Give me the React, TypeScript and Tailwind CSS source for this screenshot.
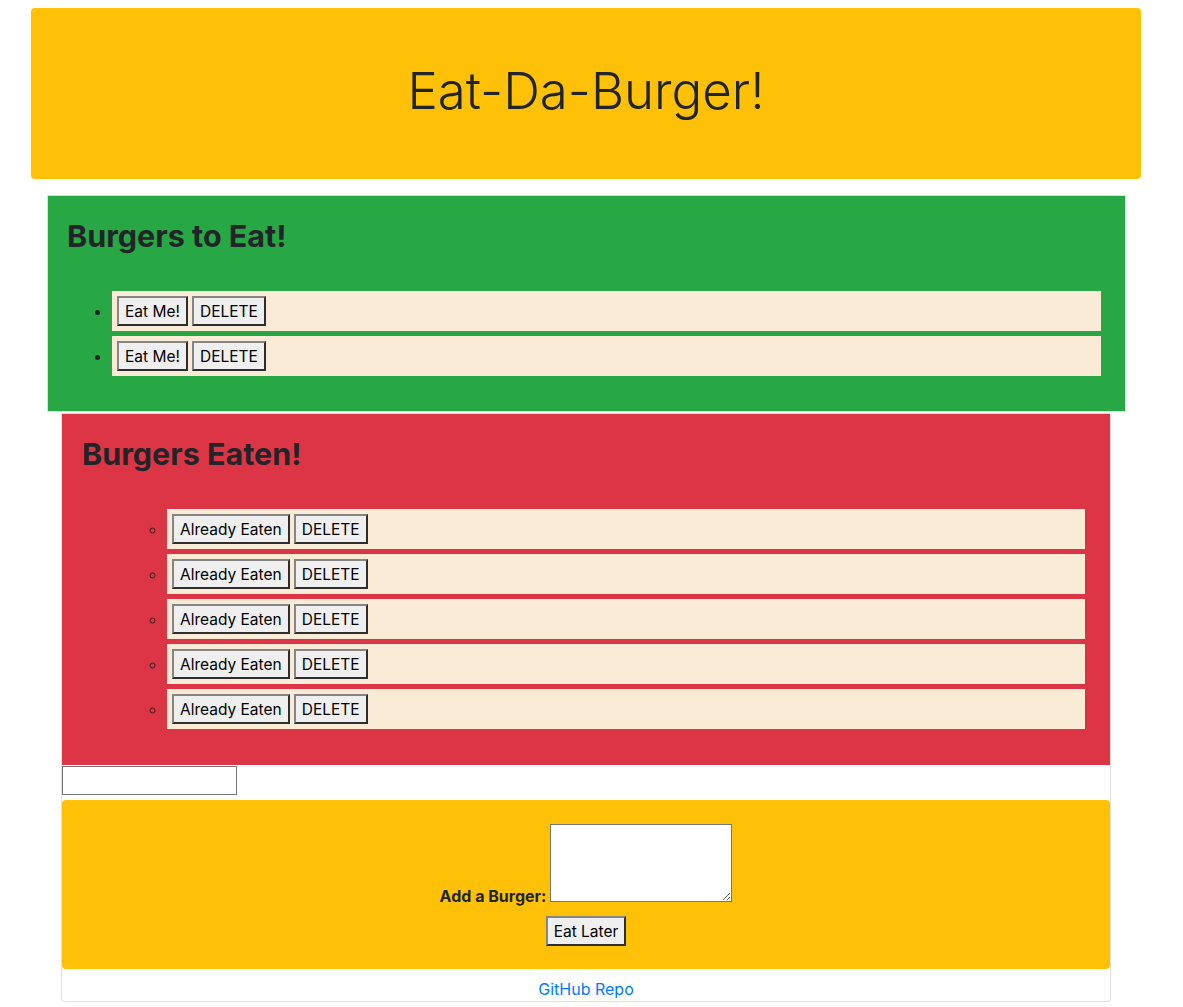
import React from 'react';

const btn =
  'h-[30px] px-[6px] pt-[1px] bg-[#efefef] text-black text-[15.5px] leading-none whitespace-nowrap border-2 border-t-[#858585] border-l-[#858585] border-r-[#2e2e2e] border-b-[#2e2e2e]';

const toEat = [1, 2];
const eaten = [1, 2, 3, 4, 5];

const App = () => {
    return (
        <div className="min-h-screen bg-white font-['Inter',sans-serif] text-[#212529]">
            <div className="ml-[31px] w-[1110px] pt-[8px] flex flex-col">
                <div className="h-[171px] bg-[#ffc107] rounded-[4px] flex items-center justify-center">
                    <h1 className="text-[51px] font-light leading-[1.2] -mt-[6px]">Eat-Da-Burger!</h1>
                </div>

                <div className="mt-[16px] mx-[15px] ml-[16px] border border-[#dedede]">
                    <div className="bg-[#28a745] px-[19px] pt-[22px] pb-[35px]">
                        <h2 className="text-[30.5px] font-bold leading-[36px] mb-[37px]">Burgers to Eat!</h2>
                        <ul className="list-disc pl-[40px]">
                            {toEat.map((id) => (
                                <li key={id} className="mx-[5px] mb-[5px] last:mb-0 bg-[#faebd7] p-[5px] marker:text-[#212529]">
                                    <div className="flex gap-[4px]">
                                        <button className={btn}>Eat Me!</button>
                                        <button className={btn}>DELETE</button>
                                    </div>
                                </li>
                            ))}
                        </ul>
                    </div>
                </div>

                <div className="mt-[1px] mx-[30px] border border-[#dfdfdf] rounded-b-[4px] flex flex-col">
                    <div className="bg-[#dc3545] px-[20px] pt-[22px] pb-[36px]">
                        <h2 className="text-[30.5px] font-bold leading-[36px] mb-[37px]">Burgers Eaten!</h2>
                        <ul className="pl-[40px]">
                            <li className="list-none">
                                <ul className="list-[circle] pl-[40px]">
                                    {eaten.map((id) => (
                                        <li key={id} className="mx-[5px] mb-[5px] last:mb-0 bg-[#faebd7] p-[5px] marker:text-[#212529]">
                                            <div className="flex gap-[4px]">
                                                <button className={btn}>Already Eaten</button>
                                                <button className={btn}>DELETE</button>
                                            </div>
                                        </li>
                                    ))}
                                </ul>
                            </li>
                        </ul>
                    </div>

                    <input type="text" className="mt-[1px] w-[175px] h-[29px] border border-[#767676] bg-white" />

                    <form className="mt-[5px] bg-[#ffc107] rounded-[4px] pt-[24px] pb-[23px] flex flex-col items-center">
                        <div className="flex items-end gap-[4px]">
                            <label className="text-[16px] font-bold leading-[12px]">Add a Burger:</label>
                            <textarea className="w-[182px] h-[78px] border border-[#767676] bg-white" />
                        </div>
                        <button type="button" className={`${btn} mt-[14px]`}>Eat Later</button>
                    </form>

                    <div className="pt-[8px] text-center leading-6">
                        <a href="#" className="text-[16px] text-[#007bff]">GitHub Repo</a>
                    </div>
                </div>
            </div>
        </div>
    );
};

export default App;
